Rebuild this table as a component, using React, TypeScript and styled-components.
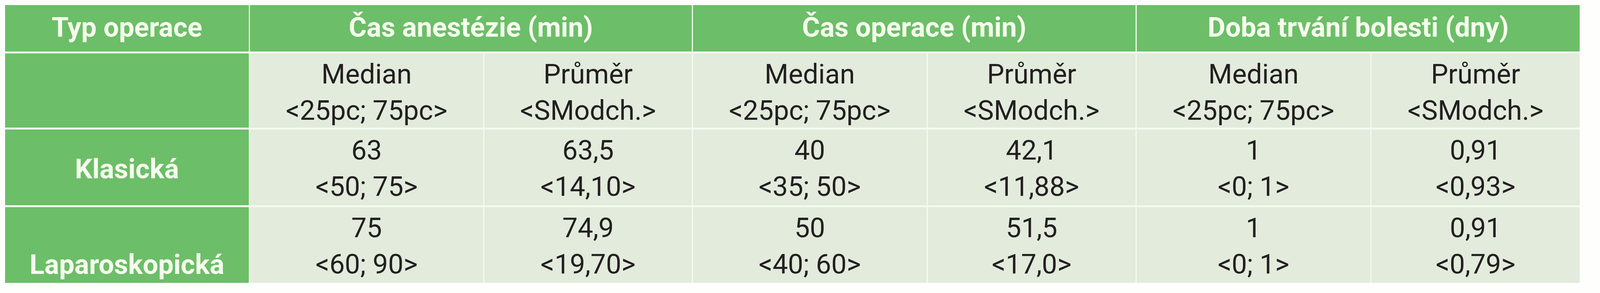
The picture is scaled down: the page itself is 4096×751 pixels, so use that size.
import React from 'react';
import styled, { createGlobalStyle } from 'styled-components';

const GlobalStyle = createGlobalStyle`
  html, body {
    margin: 0;
    padding: 0;
    background: #fefffd;
  }
  body {
    font-family: Roboto, "Liberation Sans", sans-serif;
  }
`;

type Row = {
  label: string;
  labelAlign: 'center' | 'end';
  cells: [string, string][];
};

const groups = ['Čas anestézie (min)', 'Čas operace (min)', 'Doba trvání bolesti (dny)'];

const rows: Row[] = [
  {
    label: 'Klasická',
    labelAlign: 'center',
    cells: [
      ['63', '<50; 75>'],
      ['63,5', '<14,10>'],
      ['40', '<35; 50>'],
      ['42,1', '<11,88>'],
      ['1', '<0; 1>'],
      ['0,91', '<0,93>'],
    ],
  },
  {
    label: 'Laparoskopická',
    labelAlign: 'end',
    cells: [
      ['75', '<60; 90>'],
      ['74,9', '<19,70>'],
      ['50', '<40; 60>'],
      ['51,5', '<17,0>'],
      ['1', '<0; 1>'],
      ['0,91', '<0,79>'],
    ],
  },
];

export default function App() {
  return (
    <>
      <GlobalStyle />
      <Page>
        <Table>
          <HeadCell>Typ operace</HeadCell>
          {groups.map((g) => (
            <HeadCell key={g} $span={2}>{g}</HeadCell>
          ))}

          <LabelCell $align="center" />
          {groups.map((g) => (
            <React.Fragment key={g}>
              <DataCell>
                <Line>Median</Line>
                <Line>{'<25pc; 75pc>'}</Line>
              </DataCell>
              <DataCell>
                <Line>Průměr</Line>
                <Line>{'<SModch.>'}</Line>
              </DataCell>
            </React.Fragment>
          ))}

          {rows.map((r) => (
            <React.Fragment key={r.label}>
              <LabelCell $align={r.labelAlign}>{r.label}</LabelCell>
              {r.cells.map(([a, b], i) => (
                <DataCell key={i}>
                  <Line>{a}</Line>
                  <Line>{b}</Line>
                </DataCell>
              ))}
            </React.Fragment>
          ))}
        </Table>
      </Page>
    </>
  );
}

const Page = styled.div`
  padding: 13px 0 0 13px;
`;

const Table = styled.div`
  display: grid;
  grid-template-columns: 624px 597px 531px 598px 532px 598px 533px;
  grid-template-rows: 119px 190px 194px 194px;
  column-gap: 3px;
  row-gap: 5px;
  width: max-content;
  background: #f3fbef;
`;

const HeadCell = styled.div<{ $span?: number }>`
  grid-column: span ${(p) => p.$span ?? 1};
  display: flex;
  align-items: center;
  justify-content: center;
  background: #6cbe68;
  color: #f6fdee;
  font-weight: 700;
  font-size: 70px;
  padding-bottom: 6px;
  box-sizing: border-box;
`;

const LabelCell = styled.div<{ $align: 'center' | 'end' }>`
  display: flex;
  justify-content: center;
  align-items: ${(p) => (p.$align === 'end' ? 'flex-end' : 'center')};
  background: #6cbe68;
  color: #f6fdee;
  font-weight: 700;
  font-size: 70px;
  line-height: 93px;
  padding-top: ${(p) => (p.$align === 'end' ? 0 : 8)}px;
  box-sizing: border-box;
`;

const DataCell = styled.div`
  display: flex;
  flex-direction: column;
  align-items: center;
  padding-top: 7px;
  background: #e2ebdc;
  color: #231f20;
  font-size: 70px;
  line-height: 93px;
  box-sizing: border-box;
`;

const Line = styled.div`
  white-space: nowrap;
`;
